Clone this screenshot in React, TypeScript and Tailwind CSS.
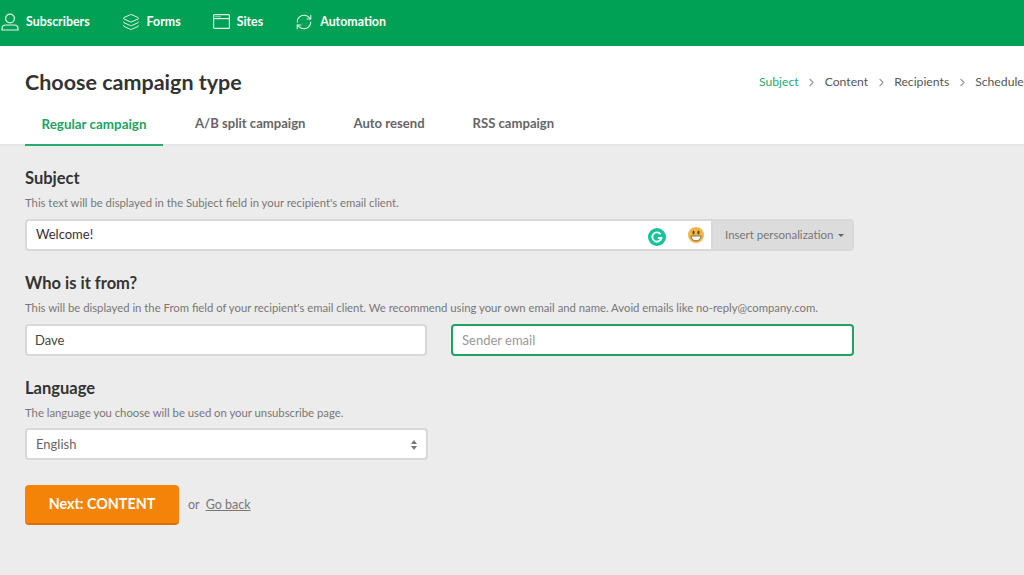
import { ChevronRight, RefreshCw, Layers } from "lucide-react";

const font = { fontFamily: '"Lato", "Open Sans", sans-serif' };

const SubscriberIcon = () => (
  <svg width="18" height="18" viewBox="0 0 18 18" fill="none" stroke="#e2f5ea" strokeWidth="1.2">
    <circle cx="9" cy="5.5" r="4.4" />
    <path d="M1 17v-1.6c0-2 1.8-3.4 4-3.4h8c2.2 0 4 1.4 4 3.4V17z" />
  </svg>
);

const SitesIcon = () => (
  <svg width="17" height="15" viewBox="0 0 17 15" fill="none" stroke="#e2f5ea" strokeWidth="1.2">
    <rect x="0.6" y="0.6" width="15.8" height="13.8" rx="1" />
    <path d="M1 4.6h15" />
    <path d="M2.5 2.6h1M4.5 2.6h1M6.5 2.6h1" />
  </svg>
);

const GrammarlyIcon = () => (
  <svg width="18" height="18" viewBox="0 0 18 18">
    <circle cx="9" cy="9" r="9" fill="#15c39a" />
    <path d="M12.6 6.2A4.6 4.6 0 1 0 13.4 10H9.8" fill="none" stroke="#fff" strokeWidth="1.8" />
    <path d="M13.6 12.8v-3h-3z" fill="#fff" />
  </svg>
);

const Smiley = () => (
  <svg width="16" height="16" viewBox="0 0 16 16">
    <circle cx="8" cy="8" r="8" fill="#f0b64a" />
    <ellipse cx="5.5" cy="5.5" rx="1" ry="2" fill="#5a4320" />
    <ellipse cx="10.5" cy="5.5" rx="1" ry="2" fill="#5a4320" />
    <path d="M3 9h10c0 3-2.2 4.8-5 4.8S3 12 3 9z" fill="#fff" stroke="#5a4320" strokeWidth="0.7" />
  </svg>
);

const navItems = [
  { label: "Subscribers", icon: <SubscriberIcon /> },
  { label: "Forms", icon: <Layers size={18} color="#e2f5ea" strokeWidth={1.3} /> },
  { label: "Sites", icon: <SitesIcon /> },
  { label: "Automation", icon: <RefreshCw size={18} color="#e2f5ea" strokeWidth={1.4} /> },
];

const tabs = ["Regular campaign", "A/B split campaign", "Auto resend", "RSS campaign"];
const steps = ["Subject", "Content", "Recipients", "Schedule"];

const App = () => {
  return (
    <div className="w-[1024px] h-[575px] overflow-hidden bg-[#ececec]" style={font}>
      <div className="h-[46px] bg-[#00a154] flex items-center pl-[1px] pb-[2px] gap-[32px]">
        {navItems.map((item) => (
          <div key={item.label} className="flex items-center gap-[7px]">
            {item.icon}
            <span className="text-white text-[12.4px] font-bold">{item.label}</span>
          </div>
        ))}
      </div>

      <div className="h-[100px] bg-white border-b-2 border-[#e6e6e6] pl-[25px] flex flex-col">
        <div className="flex items-start justify-between pt-[22px] h-[64px] shrink-0">
          <h1 className="text-[21.5px] leading-[28px] font-bold text-[#333333]">Choose campaign type</h1>
          <div className="flex items-center whitespace-nowrap w-[265px] shrink-0 mt-[5px] text-[12.2px] leading-[18px] text-[#555555]">
            {steps.map((step, i) => (
              <div key={step} className="flex items-center">
                <span className={i === 0 ? "text-[#2aaa6e]" : ""}>{step}</span>
                {i < 3 && <ChevronRight size={13} color="#999999" strokeWidth={2} className="mx-[6.5px]" />}
              </div>
            ))}
          </div>
        </div>
        <div className="flex h-[36px] shrink-0">
          {tabs.map((tab, i) => (
            <div
              key={tab}
              className={
                i === 0
                  ? "h-[36px] w-[138px] pb-[6px] flex items-center justify-center text-[13.4px] font-bold text-[#1ea362] border-b-2 border-[#2aaa6e]"
                  : "h-[36px] px-4 ml-4 pb-[8px] flex items-center text-[13.1px] font-bold text-[#666666]"
              }
            >
              {tab}
            </div>
          ))}
        </div>
      </div>

      <div className="pl-[25px] w-[854px] pt-[22px]">
        <h2 className="text-[16.5px] leading-[20px] font-bold text-[#333333]">Subject</h2>
        <p className="text-[11.3px] leading-[16px] text-[#777777] mt-[7px]">
          This text will be displayed in the Subject field in your recipient's email client.
        </p>
        <div className="mt-[8px] h-[32px] flex rounded-[4px] border-2 border-[#d8d8d8] bg-white overflow-hidden">
          <div className="flex-1 flex items-center pl-[9px] text-[13px] text-[#333333]">Welcome!</div>
          <div className="flex items-center pr-[7px]">
            <span className="mt-[4px] mr-[22px] flex"><GrammarlyIcon /></span>
            <Smiley />
          </div>
          <div className="w-[141px] bg-[#dcdcdc] border-l-2 border-[#d8d8d8] flex items-center pl-[12px] text-[11.5px] text-[#777777]">
            Insert personalization
            <span className="ml-[4px] mt-[1px] border-x-[3px] border-x-transparent border-t-[3px] border-t-[#666666]" />
          </div>
        </div>

        <h2 className="mt-[22px] text-[16.5px] leading-[20px] font-bold text-[#333333]">Who is it from?</h2>
        <p className="text-[11.3px] leading-[16px] text-[#777777] mt-[7px] whitespace-nowrap">
          This will be displayed in the From field of your recipient's email client. We recommend using your own email and name. Avoid emails like no-reply@company.com.
        </p>
        <div className="mt-[8px] flex gap-[24px]">
          <div className="flex-1 h-[32px] flex items-center rounded-[4px] border-2 border-[#d8d8d8] bg-white pl-[8px] pt-[1px] text-[13px] text-[#444444]">Dave</div>
          <div className="flex-1 h-[32px] flex items-center rounded-[4px] border-2 border-[#1ea362] bg-white pl-[9px] pt-[1px] text-[13px] text-[#999999]">Sender email</div>
        </div>

        <h2 className="mt-[22px] text-[16.5px] leading-[20px] font-bold text-[#333333]">Language</h2>
        <p className="text-[11.3px] leading-[16px] text-[#777777] mt-[7px]">
          The language you choose will be used on your unsubscribe page.
        </p>
        <div className="mt-[7px] w-[403px] h-[32px] flex items-center justify-between rounded-[4px] border-2 border-[#d8d8d8] bg-white pl-[9px] pr-[9px] pt-[1px] text-[13px] text-[#666666]">
          English
          <span className="flex flex-col gap-[2px]">
            <span className="border-x-[3px] border-x-transparent border-b-[4px] border-b-[#777777]" />
            <span className="border-x-[3px] border-x-transparent border-t-[4px] border-t-[#777777]" />
          </span>
        </div>

        <div className="mt-[25px] flex items-center">
          <div className="w-[154px] h-[40px] rounded-[4px] bg-[#f48409] border-b-2 border-[#d97106] flex items-center justify-center text-white text-[14.3px] font-bold">
            Next: CONTENT
          </div>
          <span className="ml-[9px] text-[12.5px] text-[#777777]">or</span>
          <span className="ml-[6px] text-[12.5px] text-[#777777] underline">Go back</span>
        </div>
      </div>
    </div>
  );
};

export default App;
